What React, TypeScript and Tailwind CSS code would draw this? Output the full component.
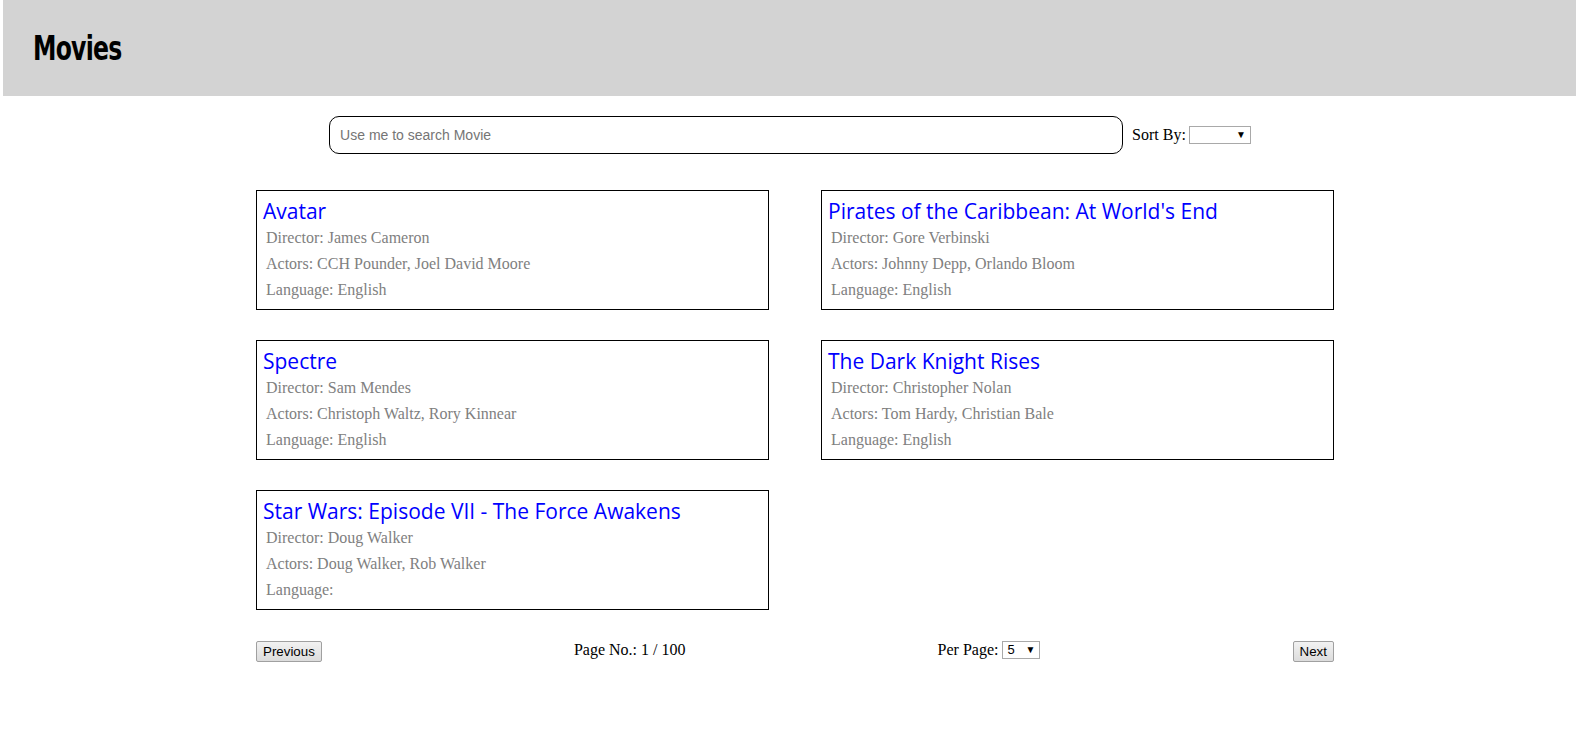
import React from 'react';

type Movie = {
  title: string;
  director: string;
  actors: string;
  language: string;
};

const movies: Movie[] = [
  { title: 'Avatar', director: 'James Cameron', actors: 'CCH Pounder, Joel David Moore', language: 'English' },
  {
    title: "Pirates of the Caribbean: At World's End",
    director: 'Gore Verbinski',
    actors: 'Johnny Depp, Orlando Bloom',
    language: 'English',
  },
  { title: 'Spectre', director: 'Sam Mendes', actors: 'Christoph Waltz, Rory Kinnear', language: 'English' },
  { title: 'The Dark Knight Rises', director: 'Christopher Nolan', actors: 'Tom Hardy, Christian Bale', language: 'English' },
  { title: 'Star Wars: Episode VII - The Force Awakens', director: 'Doug Walker', actors: 'Doug Walker, Rob Walker', language: '' },
];

const serif = { fontFamily: '"Liberation Serif", "Times New Roman", serif' };
const arial = { fontFamily: '"Liberation Sans", Arial, sans-serif' };

const MiniSelect: React.FC<{ value: string; width: string }> = ({ value, width }) => (
  <div
    className={`relative h-[18px] ${width} border border-[#a9a9a9] bg-white text-[13px] leading-[16px] text-black`}
    style={arial}
  >
    <span className="pl-[4px]">{value}</span>
    <span className="absolute right-[4px] top-0 text-[10px] leading-[16px]">▼</span>
  </div>
);

const MovieCard: React.FC<{ movie: Movie }> = ({ movie }) => (
  <div className="h-[120px] border border-black pt-[7px] pb-[5px]">
    <h3
      className="pl-[6px] text-[21px] leading-[27px] text-[#0000ff] whitespace-nowrap"
      style={{ fontFamily: '"Comic Sans MS", "Open Sans", sans-serif' }}
    >
      {movie.title}
    </h3>
    <div className="pl-[9px] text-[16px] leading-[26px] text-[#808080]" style={serif}>
      <p>Director: {movie.director}</p>
      <p>Actors: {movie.actors}</p>
      <p>Language: {movie.language}</p>
    </div>
  </div>
);

const PageButton: React.FC<{ label: string }> = ({ label }) => (
  <button
    className="h-[21px] rounded-[2px] border border-[#a0a0a0] bg-[linear-gradient(#f2f2f2,#dcdcdc)] px-[6px] text-[13.33px] leading-[17px] text-black"
    style={arial}
  >
    {label}
  </button>
);

export default function App() {
  return (
    <div className="min-h-screen bg-white">
      <header className="ml-[3px] flex h-[96px] items-center bg-[#d3d3d3] pl-[30px]">
        <h1
          className="origin-left scale-x-[0.77] text-[34px] font-extrabold leading-none tracking-[-1px] text-black"
          style={{ fontFamily: 'Impact, "Liberation Sans Narrow", "DejaVu Sans Condensed", sans-serif' }}
        >
          Movies
        </h1>
      </header>

      <div className="mt-[20px] flex items-center justify-center pl-[4px]">
        <div className="flex h-[38px] w-[794px] items-center rounded-[10px] border border-black px-[10px]">
          <span className="text-[14px] text-[#757575]" style={arial}>
            Use me to search Movie
          </span>
        </div>
        <span className="ml-[9px] mr-[3px] text-[16px] text-black" style={serif}>
          Sort By:
        </span>
        <MiniSelect value="" width="w-[62px]" />
      </div>

      <div className="ml-[256px] mt-[36px] grid w-[1078px] grid-cols-2 gap-x-[52px] gap-y-[30px]">
        {movies.map((m) => (
          <MovieCard key={m.title} movie={m} />
        ))}
      </div>

      <div className="ml-[256px] mt-[31px] flex w-[1078px] items-start justify-between">
        <PageButton label="Previous" />
        <span className="text-[16px] leading-[18px] text-black" style={serif}>
          Page No.: 1 / 100
        </span>
        <div className="flex items-center gap-[4px] text-[16px] leading-[18px] text-black" style={serif}>
          <span>Per Page:</span>
          <MiniSelect value="5" width="w-[38px]" />
        </div>
        <PageButton label="Next" />
      </div>
    </div>
  );
}
